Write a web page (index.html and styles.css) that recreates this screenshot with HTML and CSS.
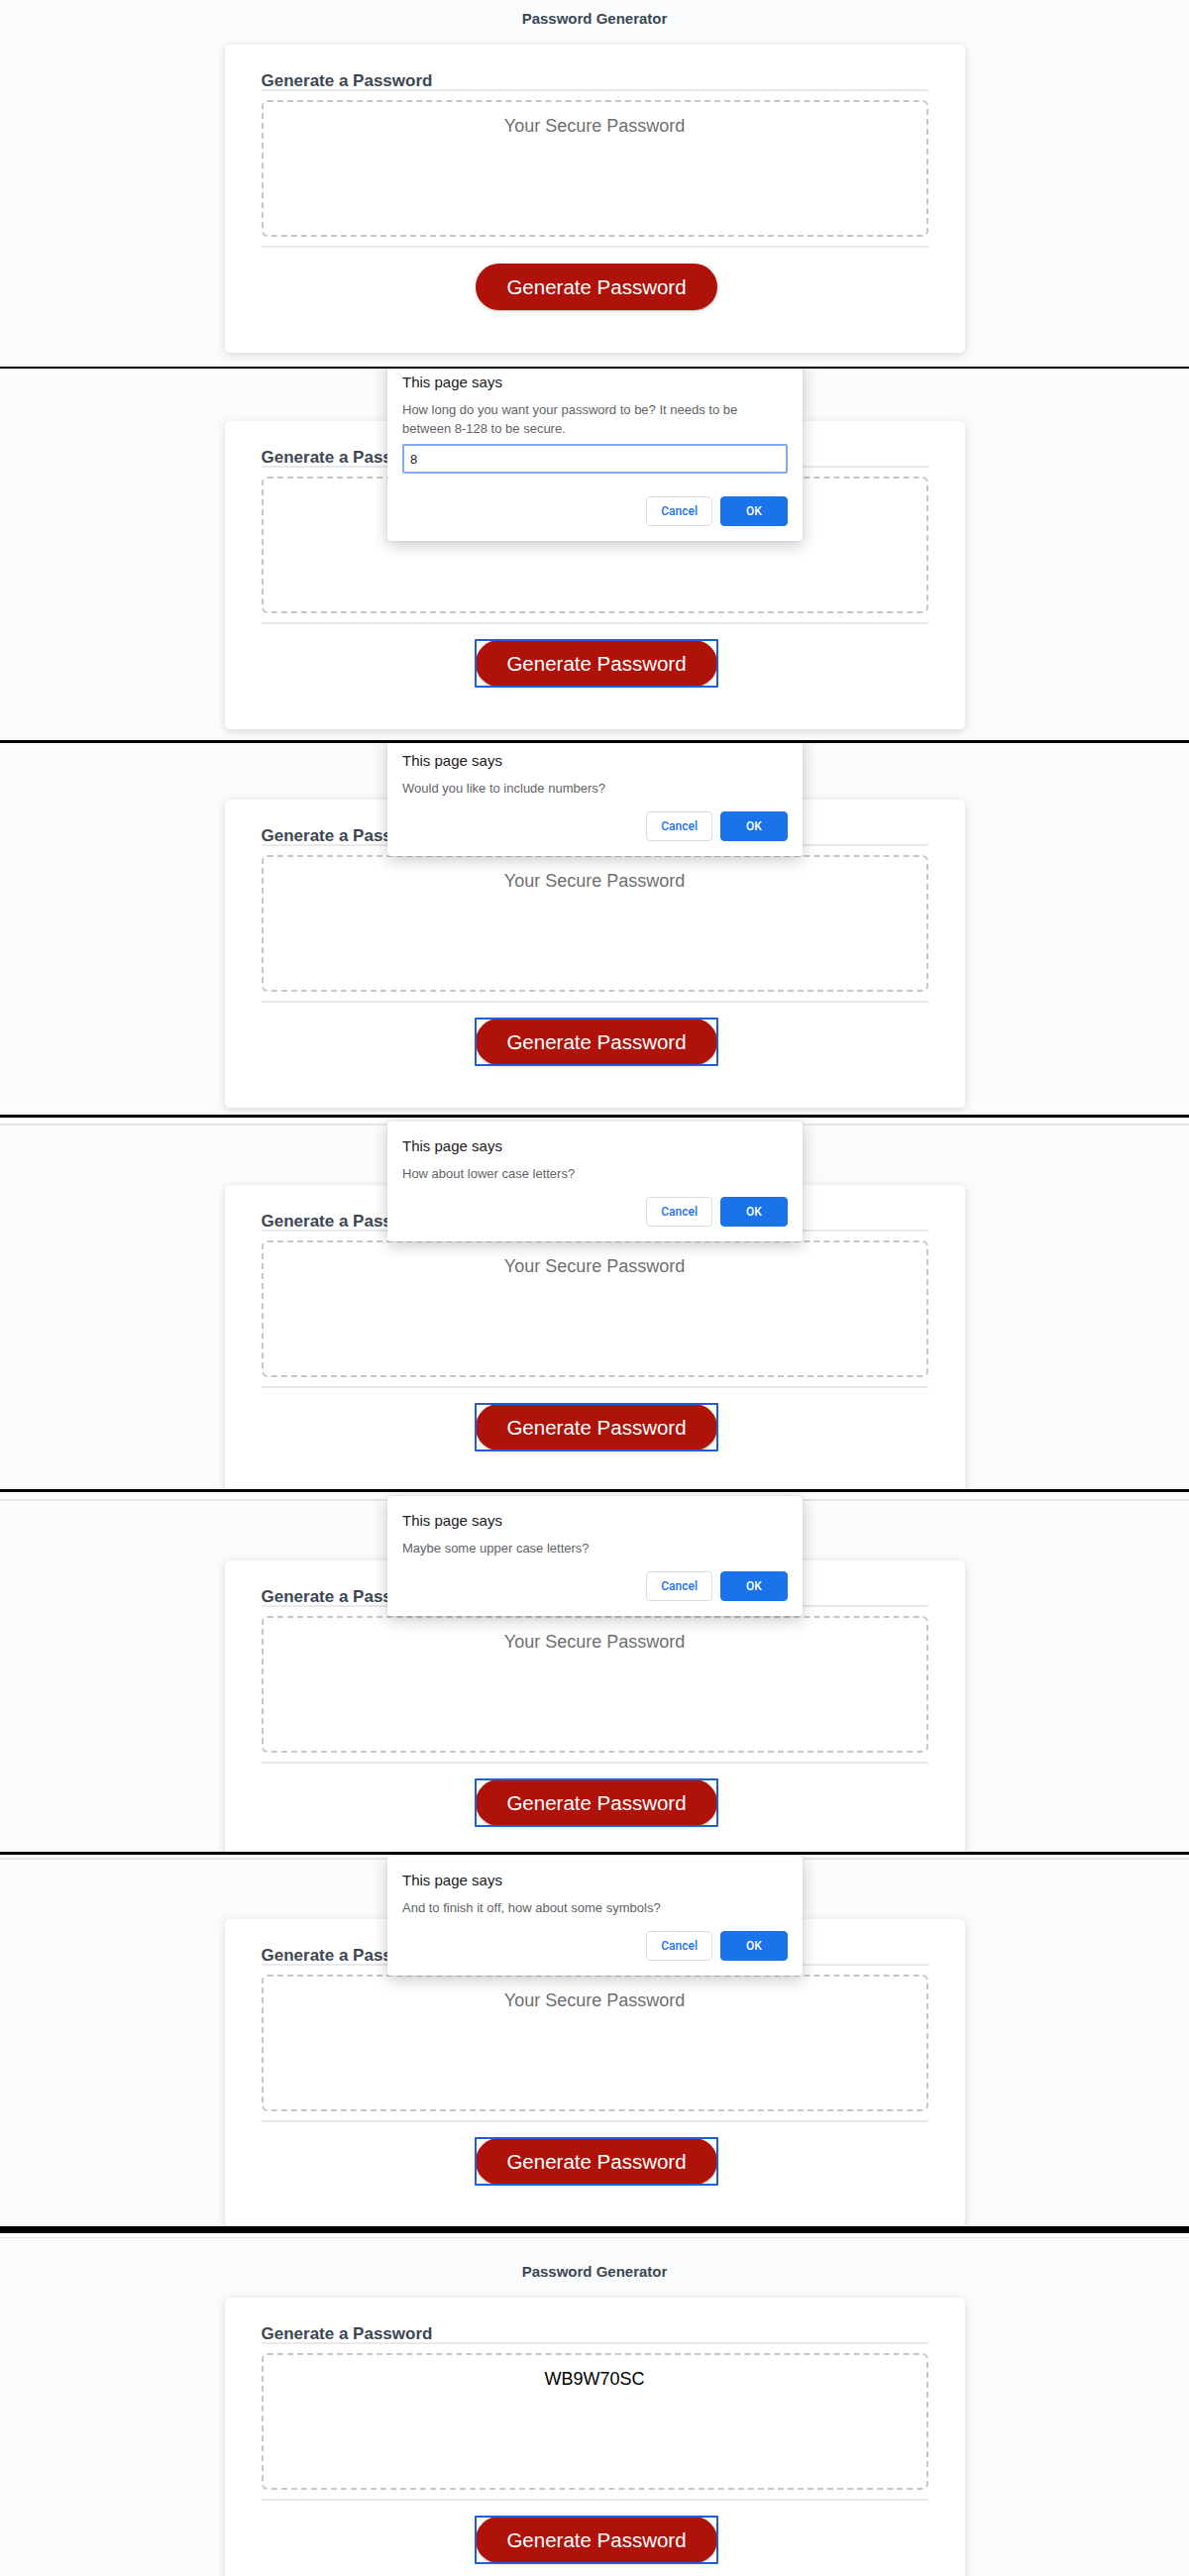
FILE: index.html
```html
<!DOCTYPE html>
<html lang="en">
<head>
<meta charset="utf-8">
<title>Password Generator</title>
<link rel="stylesheet" href="styles.css">
</head>
<body>

<section class="frame f1">
  <div class="page p1">
    <header class="site-header"><h1>Password Generator</h1></header>
    <div class="card">
      <div class="card-header"><h2>Generate a Password</h2></div>
      <div class="card-body"><textarea readonly class="password" placeholder="Your Secure Password" aria-label="Generated Password"></textarea></div>
      <div class="card-footer"><button class="btn">Generate Password</button></div>
    </div>
  </div>
</section>
<div class="sep s1"></div>

<section class="frame f2">
  <div class="page p2">
    <header class="site-header"><h1>Password Generator</h1></header>
    <div class="card">
      <div class="card-header"><h2>Generate a Password</h2></div>
      <div class="card-body"><textarea readonly class="password" placeholder="Your Secure Password" aria-label="Generated Password"></textarea></div>
      <div class="card-footer"><button class="btn focused">Generate Password</button></div>
    </div>
  </div>
  <div class="dialog prompt d2" role="dialog">
    <div class="dialog-title">This page says</div>
    <div class="dialog-msg">How long do you want your password to be? It needs to be<br>between 8-128 to be secure.</div>
    <input class="dialog-input" type="text" value="8" aria-label="Password length">
    <div class="dialog-actions"><button class="dbtn cancel">Cancel</button><button class="dbtn ok">OK</button></div>
  </div>
</section>
<div class="sep s2"></div>

<section class="frame f3">
  <div class="page p3">
    <header class="site-header"><h1>Password Generator</h1></header>
    <div class="card">
      <div class="card-header"><h2>Generate a Password</h2></div>
      <div class="card-body"><textarea readonly class="password" placeholder="Your Secure Password" aria-label="Generated Password"></textarea></div>
      <div class="card-footer"><button class="btn focused">Generate Password</button></div>
    </div>
  </div>
  <div class="dialog d3" role="dialog">
    <div class="dialog-title">This page says</div>
    <div class="dialog-msg">Would you like to include numbers?</div>
    <div class="dialog-actions"><button class="dbtn cancel">Cancel</button><button class="dbtn ok">OK</button></div>
  </div>
</section>
<div class="sep s3"></div>

<section class="frame f4">
  <div class="topline t4"></div>
  <div class="page p4">
    <header class="site-header"><h1>Password Generator</h1></header>
    <div class="card">
      <div class="card-header"><h2>Generate a Password</h2></div>
      <div class="card-body"><textarea readonly class="password" placeholder="Your Secure Password" aria-label="Generated Password"></textarea></div>
      <div class="card-footer"><button class="btn focused">Generate Password</button></div>
    </div>
  </div>
  <div class="dialog d4" role="dialog">
    <div class="dialog-title">This page says</div>
    <div class="dialog-msg">How about lower case letters?</div>
    <div class="dialog-actions"><button class="dbtn cancel">Cancel</button><button class="dbtn ok">OK</button></div>
  </div>
</section>
<div class="sep s4"></div>

<section class="frame f5">
  <div class="topline t5"></div>
  <div class="page p5">
    <header class="site-header"><h1>Password Generator</h1></header>
    <div class="card">
      <div class="card-header"><h2>Generate a Password</h2></div>
      <div class="card-body"><textarea readonly class="password" placeholder="Your Secure Password" aria-label="Generated Password"></textarea></div>
      <div class="card-footer"><button class="btn focused">Generate Password</button></div>
    </div>
  </div>
  <div class="dialog d5" role="dialog">
    <div class="dialog-title">This page says</div>
    <div class="dialog-msg">Maybe some upper case letters?</div>
    <div class="dialog-actions"><button class="dbtn cancel">Cancel</button><button class="dbtn ok">OK</button></div>
  </div>
</section>
<div class="sep s5"></div>

<section class="frame f6">
  <div class="topline t6"></div>
  <div class="page p6">
    <header class="site-header"><h1>Password Generator</h1></header>
    <div class="card">
      <div class="card-header"><h2>Generate a Password</h2></div>
      <div class="card-body"><textarea readonly class="password" placeholder="Your Secure Password" aria-label="Generated Password"></textarea></div>
      <div class="card-footer"><button class="btn focused">Generate Password</button></div>
    </div>
  </div>
  <div class="dialog d6" role="dialog">
    <div class="dialog-title">This page says</div>
    <div class="dialog-msg">And to finish it off, how about some symbols?</div>
    <div class="dialog-actions"><button class="dbtn cancel">Cancel</button><button class="dbtn ok">OK</button></div>
  </div>
</section>
<div class="sep s6"></div>

<section class="frame f7">
  <div class="topline t7"></div>
  <div class="page p7">
    <header class="site-header"><h1>Password Generator</h1></header>
    <div class="card">
      <div class="card-header"><h2>Generate a Password</h2></div>
      <div class="card-body"><textarea readonly class="password" placeholder="Your Secure Password" aria-label="Generated Password">WB9W70SC</textarea></div>
      <div class="card-footer"><button class="btn focused">Generate Password</button></div>
    </div>
  </div>
</section>

</body>
</html>
```

FILE: styles.css
```css
* {
  box-sizing: border-box;
}

html,
body {
  margin: 0;
  padding: 0;
}

body {
  background: #f9fbfd;
  font-family: "Liberation Sans", Arial, Helvetica, sans-serif;
}

/* ---------- screenshot frames ---------- */
.frame {
  position: relative;
  overflow: hidden;
  background: #f9fbfd;
}

.f1 { height: 370px; }
.f2 { height: 375px; }
.f3 { height: 375px; }
.f4 { height: 375px; }
.f5 { height: 363px; }
.f6 { height: 375px; }
.f7 { height: 346px; }

.sep { background: #000; }
.s1 { height: 2px; }
.s2 { height: 3px; }
.s3 { height: 3px; }
.s4 { height: 3px; }
.s5 { height: 3px; }
.s6 { height: 7px; }

.topline {
  background: #fdfdfd;
  border-bottom: 2px solid #e5e6e8;
}
.t4 { height: 8px; }
.t5 { height: 9px; }
.t6 { height: 5px; }
.t7 { height: 5px; border-bottom-width: 1px; }

.page {
  padding-left: 20px;
  padding-right: 20px;
}
.p1 { padding-top: 10px; }
.p2 { padding-top: 18px; }
.p3 { padding-top: 22px; }
.p4 { padding-top: 25px; }
.p5 { padding-top: 25px; }
.p6 { padding-top: 25px; }
.p7 { padding-top: 25px; }

/* ---------- page ---------- */
.site-header {
  text-align: center;
  color: #3b4854;
}

.site-header h1 {
  margin: 0;
  padding-bottom: 17px;
  font-size: 15px;
  line-height: 18px;
  font-weight: 700;
}

.card {
  width: 747px;
  margin: 0 auto;
  padding: 28px 37px;
  background: #fff;
  border-radius: 5px;
  box-shadow: rgba(0, 0, 0, 0.15) 0 2px 8px 0;
  color: #3b4854;
  font-size: 17px;
}

.card-header h2 {
  margin: 0;
  font-size: 17px;
  line-height: 17px;
  font-weight: 700;
}

.card-header::after {
  content: "";
  display: block;
  height: 2px;
  background: #e7e9eb;
}

.password {
  display: block;
  width: 100%;
  height: 138px;
  margin: 9px 0;
  padding: 14px 14px 0;
  border: 2px dashed #c0c7cf;
  border-radius: 6px;
  background: #fff;
  color: #000;
  font-family: "Liberation Sans", Arial, sans-serif;
  font-size: 18px;
  text-align: center;
  resize: none;
  overflow: hidden;
  outline: none;
}

.password::placeholder {
  color: #6f6f6f;
  opacity: 1;
}

.card-body::after {
  content: "";
  display: block;
  height: 2px;
  background: #e7e9eb;
}

.card-footer {
  display: flex;
  justify-content: center;
}

.btn {
  position: relative;
  margin: 16px 15px 15px 19px;
  padding: 13px 31px;
  border: none;
  border-radius: 25px;
  background: #af1209;
  box-shadow: rgba(0, 0, 0, 0.1) 0 1px 6px 0, rgba(0, 0, 0, 0.2) 0 1px 1px 0;
  color: #fff;
  font-family: "Liberation Sans", Arial, sans-serif;
  font-size: 20.5px;
  line-height: 21px;
  cursor: pointer;
}

/* rectangular keyboard focus ring drawn over the pill */
.btn.focused::after {
  content: "";
  position: absolute;
  top: -1px;
  right: -1px;
  bottom: -1px;
  left: -1px;
  border: 2px solid #1d5fd6;
  border-radius: 1px;
}

/* ---------- browser dialog ---------- */
.dialog {
  position: absolute;
  left: 391px;
  width: 419px;
  padding: 16px 15px 15px;
  background: #fff;
  border-radius: 3px;
  box-shadow: 0 4px 16px rgba(0, 0, 0, 0.22), 0 0 1px rgba(0, 0, 0, 0.25);
  z-index: 2;
}

.d2 { top: -11px; }
.d3 { top: -7px; }
.d4 { top: 4px; }
.d5 { top: 4px; }
.d6 { top: 1px; }

.dialog-title {
  font-size: 15px;
  line-height: 18px;
  color: #202124;
}

.dialog-msg {
  margin-top: 9px;
  font-size: 13px;
  line-height: 19px;
  color: #5f6368;
}

.dialog-input {
  display: block;
  width: 100%;
  height: 30px;
  margin-top: 6px;
  padding: 0 6px;
  border: 2px solid #82a9f0;
  border-radius: 2px;
  font-family: "Liberation Sans", Arial, sans-serif;
  font-size: 13px;
  color: #202124;
  outline: none;
}

.dialog-actions {
  display: flex;
  justify-content: flex-end;
  gap: 8px;
  margin-top: 14px;
}

.prompt .dialog-actions {
  margin-top: 23px;
}

.dbtn {
  height: 30px;
  min-width: 66px;
  padding: 0 14px;
  border-radius: 4px;
  font-family: Roboto, "Liberation Sans", sans-serif;
  font-size: 12px;
  font-weight: 500;
  cursor: pointer;
}

.cancel {
  background: #fff;
  border: 1px solid #dadce0;
  color: #1a73e8;
}

.ok {
  min-width: 68px;
  background: #1a73e8;
  border: 1px solid #1a73e8;
  color: #fff;
}
```
